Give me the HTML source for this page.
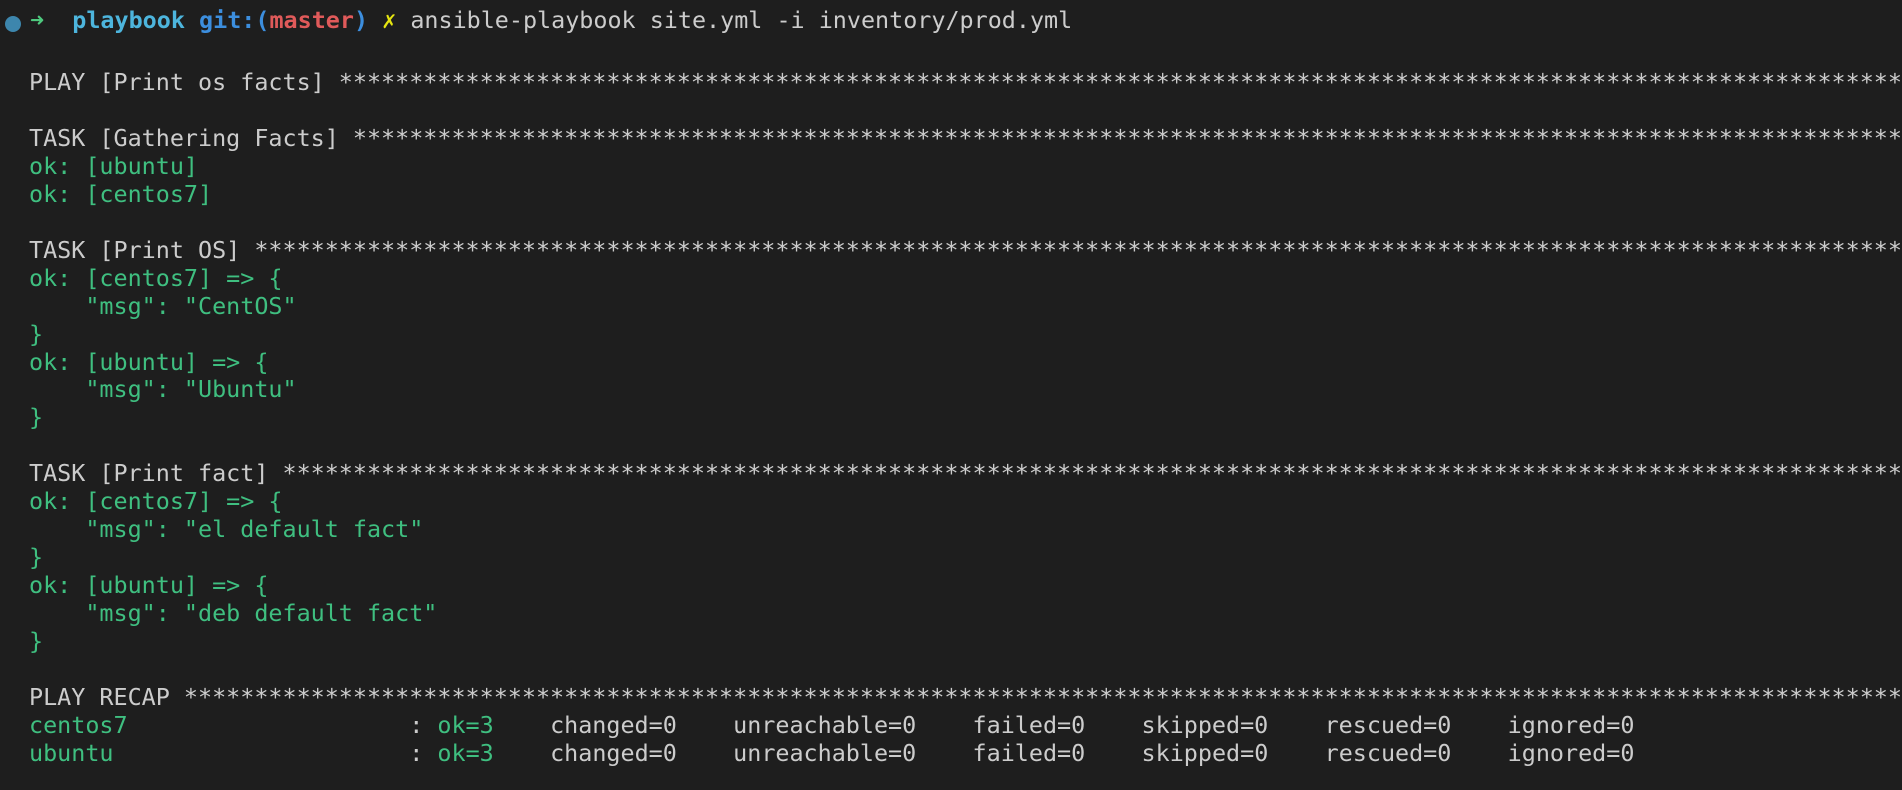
<!DOCTYPE html>
<html><head><meta charset="utf-8"><style>
html,body{margin:0;padding:0;background:#1e1e1e;width:1902px;height:790px;overflow:hidden}
.t{position:absolute;left:29px;top:69px;font-family:"DejaVu Sans Mono","Liberation Mono",monospace;font-size:23.4px;line-height:27.95px;color:#cccccc;white-space:pre;margin:0}
.g{color:#3fbf80}
.p{position:absolute;left:30px;top:6px;font-family:"DejaVu Sans Mono","Liberation Mono",monospace;font-size:23.4px;line-height:28px;white-space:pre;color:#cccccc}
.dot{position:absolute;left:5px;top:16px;width:16px;height:16px;border-radius:50%;background:#3d86ad}
</style></head><body>
<div class="dot"></div>
<div class="p"><span style="color:#4ec97e">➜</span>  <b style="color:#4db5dd">playbook</b> <b style="color:#3c8ede">git:(</b><b style="color:#e05a5a">master</b><b style="color:#3c8ede">)</b> <span style="color:#e5e510">✗</span> ansible-playbook site.yml -i inventory/prod.yml</div>
<pre class="t">PLAY [Print os facts] ***************************************************************************************************************

TASK [Gathering Facts] **************************************************************************************************************
<span class="g">ok: [ubuntu]
ok: [centos7]</span>

TASK [Print OS] *********************************************************************************************************************
<span class="g">ok: [centos7] =&gt; {
    "msg": "CentOS"
}
ok: [ubuntu] =&gt; {
    "msg": "Ubuntu"
}</span>

TASK [Print fact] *******************************************************************************************************************
<span class="g">ok: [centos7] =&gt; {
    "msg": "el default fact"
}
ok: [ubuntu] =&gt; {
    "msg": "deb default fact"
}</span>

PLAY RECAP **************************************************************************************************************************
<span class="g">centos7</span>                    : <span class="g">ok=3</span>    changed=0    unreachable=0    failed=0    skipped=0    rescued=0    ignored=0
<span class="g">ubuntu</span>                     : <span class="g">ok=3</span>    changed=0    unreachable=0    failed=0    skipped=0    rescued=0    ignored=0</pre>
</body></html>
